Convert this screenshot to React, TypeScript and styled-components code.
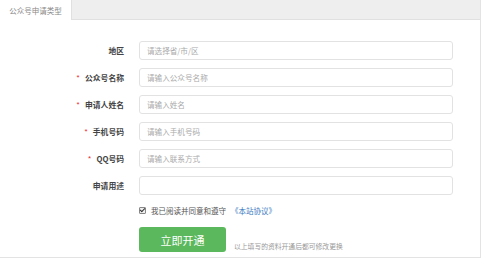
import React from "react";
import styled, { createGlobalStyle } from "styled-components";

const GlobalStyle = createGlobalStyle`
  html, body {
    margin: 0;
    padding: 0;
    background: #ffffff;
    font-family: "Noto Sans CJK SC", "Liberation Sans", sans-serif;
  }
`;

const Panel = styled.div`
  width: 481px;
  height: 258px;
  border-right: 1px solid #e3e3e3;
  border-bottom: 1px solid #e3e3e3;
  box-sizing: border-box;
  background: #fff;
`;

const TabBar = styled.div`
  display: flex;
  height: 20px;
  background: #eeeeee;
  border-bottom: 1px solid #e0e0e0;
  box-sizing: border-box;
`;

const Tab = styled.div<{ $active?: boolean }>`
  width: 72px;
  height: 20px;
  display: flex;
  align-items: center;
  justify-content: center;
  font-size: 7.5px;
  color: #888;
  background: ${(p) => (p.$active ? "#fff" : "transparent")};
  border-right: 1px solid #e0e0e0;
  box-sizing: border-box;
`;

const Form = styled.div`
  display: grid;
  grid-template-columns: 124px 314px;
  column-gap: 15px;
  row-gap: 8px;
  padding-top: 21px;
`;

const Label = styled.div`
  display: flex;
  align-items: center;
  justify-content: flex-end;
  height: 19px;
  font-size: 7.8px;
  font-weight: 700;
  color: #444;
`;

const Star = styled.span`
  color: #e33;
  margin-right: 5px;
  font-weight: 400;
`;

const Input = styled.input`
  height: 19px;
  box-sizing: border-box;
  border: 1px solid #e2e2e2;
  border-radius: 3px;
  padding: 0 7px;
  font-family: inherit;
  font-size: 7.6px;
  color: #333;
  outline: none;
  &::placeholder {
    color: #aaa;
  }
`;

const Agree = styled.div`
  grid-column: 2;
  display: flex;
  align-items: center;
  margin-top: 2px;
  font-size: 7.5px;
  color: #555;
`;

const Check = styled.span`
  width: 5px;
  height: 5px;
  border: 1px solid #888;
  background: #eee;
  border-radius: 1px;
  margin-right: 5px;
  position: relative;
  &::after {
    content: "";
    position: absolute;
    left: 1px;
    top: -1px;
    width: 2px;
    height: 4px;
    border: solid #333;
    border-width: 0 1.2px 1.2px 0;
    transform: rotate(45deg);
  }
`;

const Link = styled.span`
  color: #3b7ac2;
  margin-left: 5px;
`;

const Actions = styled.div`
  grid-column: 2;
  display: flex;
  align-items: flex-end;
  gap: 8px;
  margin-top: 3px;
`;

const Submit = styled.button`
  width: 87px;
  height: 25px;
  border: none;
  border-radius: 3px;
  background: #5cb85c;
  color: #fff;
  font-family: inherit;
  font-size: 11px;
  padding: 0;
`;

const Note = styled.span`
  font-size: 6.8px;
  color: #999;
  margin-bottom: 1px;
`;

const fields: { label: string; required: boolean; placeholder: string }[] = [
  { label: "地区", required: false, placeholder: "请选择省/市/区" },
  { label: "公众号名称", required: true, placeholder: "请输入公众号名称" },
  { label: "申请人姓名", required: true, placeholder: "请输入姓名" },
  { label: "手机号码", required: true, placeholder: "请输入手机号码" },
  { label: "QQ号码", required: true, placeholder: "请输入联系方式" },
  { label: "申请用途", required: false, placeholder: "" },
];

export default function App() {
  return (
    <>
      <GlobalStyle />
      <Panel>
        <TabBar>
          <Tab $active>公众号申请类型</Tab>
        </TabBar>
        <Form>
          {fields.map((f) => (
            <React.Fragment key={f.label}>
              <Label>
                {f.required && <Star>*</Star>}
                {f.label}
              </Label>
              <Input placeholder={f.placeholder} />
            </React.Fragment>
          ))}
          <Agree>
            <Check />
            我已阅读并同意和遵守
            <Link>《本站协议》</Link>
          </Agree>
          <Actions>
            <Submit>立即开通</Submit>
            <Note>以上填写的资料开通后都可修改更换</Note>
          </Actions>
        </Form>
      </Panel>
    </>
  );
}
